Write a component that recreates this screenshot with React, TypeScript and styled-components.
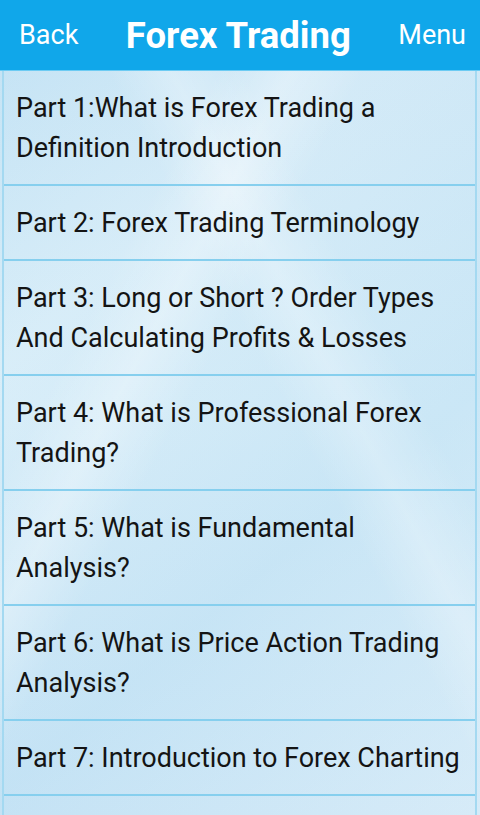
import React from 'react';
import styled, { createGlobalStyle } from 'styled-components';

const GlobalStyle = createGlobalStyle`
  html, body {
    margin: 0;
    padding: 0;
    height: 100%;
    overflow: hidden;
  }
  body {
    font-family: Roboto, "Noto Sans", sans-serif;
    background: #cfe8f7;
  }
`;

const parts = [
  'Part 1:What is Forex Trading a Definition Introduction',
  'Part 2: Forex Trading Terminology',
  'Part 3: Long or Short ? Order Types And Calculating Profits & Losses',
  'Part 4: What is Professional Forex Trading?',
  'Part 5: What is Fundamental Analysis?',
  'Part 6: What is Price Action Trading Analysis?',
  'Part 7: Introduction to Forex Charting',
];

export default function App() {
  return (
    <>
      <GlobalStyle />
      <Screen>
        <Header>
          <HeaderButton>Back</HeaderButton>
          <Title>Forex Trading</Title>
          <HeaderButton>Menu</HeaderButton>
        </Header>
        <List>
          {parts.map((p) => (
            <Row key={p}>{p}</Row>
          ))}
        </List>
      </Screen>
    </>
  );
}

const Screen = styled.div`
  width: 480px;
  height: 815px;
  display: flex;
  flex-direction: column;
  overflow: hidden;
  background:
    linear-gradient(118deg, rgba(255,255,255,0) 28%, rgba(255,255,255,0.3) 36%, rgba(255,255,255,0) 44%),
    linear-gradient(62deg, rgba(255,255,255,0) 55%, rgba(255,255,255,0.25) 62%, rgba(255,255,255,0) 70%),
    linear-gradient(140deg, rgba(160,210,238,0.25) 0%, rgba(255,255,255,0.1) 30%, rgba(160,210,238,0.2) 65%, rgba(255,255,255,0.2) 100%),
    linear-gradient(180deg, #cde7f6 0%, #d5ecf8 50%, #cce6f6 100%);
`;

const Header = styled.div`
  height: 71px;
  flex-shrink: 0;
  background: #10a7ea;
  border-bottom: 1px solid #6ccbf3;
  display: flex;
  align-items: center;
  justify-content: space-between;
  padding: 0 14px 0 19px;
  box-sizing: border-box;
  color: #fff;
`;

const HeaderButton = styled.div`
  font-size: 27px;
  font-weight: 400;
  line-height: 1;
  margin-top: 1px;
`;

const Title = styled.div`
  font-size: 36.5px;
  font-weight: 700;
  line-height: 1;
  margin-top: 2px;
`;

const List = styled.div`
  margin: 0 3px 0 2px;
  border-left: 2px solid #a4d9f1;
  border-right: 2px solid #a4d9f1;
  flex: 1;
`;

const Row = styled.div`
  padding: 17px 8px 16px 12px;
  font-size: 27px;
  line-height: 40px;
  color: #141414;
  border-bottom: 2px solid #86cfee;
`;
